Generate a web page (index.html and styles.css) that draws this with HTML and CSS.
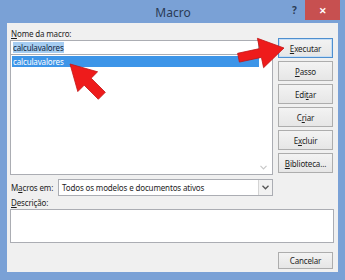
FILE: index.html
```html
<!DOCTYPE html>
<html lang="pt">
<head>
    <meta charset="UTF-8">
    <title>Macro</title>
    <link rel="stylesheet" href="styles.css">
</head>
<body>
    <div class="window">
        <div class="titlebar">
            <span class="title">Macro</span>
            <span class="help">?</span>
            <span class="close">&#x2715;</span>
        </div>

        <div class="client">
            <div class="top">
                <div class="left">
                    <div class="label"><u>N</u>ome da macro:</div>
                    <div class="input"><span class="sel">calculavalores</span></div>
                    <div class="list">
                        <div class="row active">calculavalores</div>
                        <svg class="scroll-down" width="7" height="5" viewBox="0 0 7 5"><path d="M0.5 0.8 L3.5 3.8 L6.5 0.8" fill="none" stroke="#c8c8c8" stroke-width="1.2"/></svg>
                    </div>
                    <div class="macros-in">
                        <span class="label">M<u>a</u>cros em:</span>
                        <div class="combo">
                            <span class="combo-text">Todos os modelos e documentos ativos</span>
                            <span class="combo-btn">
                                <svg width="7" height="5" viewBox="0 0 7 5"><path d="M0.5 0.8 L3.5 3.8 L6.5 0.8" fill="none" stroke="#555" stroke-width="1.3"/></svg>
                            </span>
                        </div>
                    </div>
                </div>

                <div class="buttons">
                    <button class="btn default"><u>E</u>xecutar</button>
                    <button class="btn"><u>P</u>asso</button>
                    <button class="btn">Edi<u>t</u>ar</button>
                    <button class="btn">C<u>r</u>iar</button>
                    <button class="btn">E<u>x</u>cluir</button>
                    <button class="btn"><u>B</u>iblioteca...</button>
                </div>
            </div>

            <div class="label desc-label"><u>D</u>escrição:</div>
            <div class="desc"></div>

            <div class="footer">
                <button class="btn">Cancelar</button>
            </div>
        </div>

        <!-- red callout arrows drawn over the dialog -->
        <svg class="arrows" width="345" height="280" viewBox="0 0 345 280">
            <polygon points="284,48 263.6,67.7 261.4,57.4 239.4,62.1 237.6,53.3 259.6,48.6 257.4,38.3" />
            <polygon points="70,64 97.6,71.8 91.2,78.2 105.3,92.3 98.3,99.3 84.2,85.2 77.8,91.6" />
        </svg>
    </div>
</body>
</html>
```

FILE: styles.css
```css
body {
    margin: 0;
    padding: 0;
    font-family: "Noto Sans", "Open Sans", sans-serif;
    font-size: 8px;
    letter-spacing: -0.15px;
    color: #1e1e1e;
}

.window {
    position: relative;
    width: 345px;
    height: 280px;
    background-color: #7aa1d6;
    display: flex;
    flex-direction: column;
}

.titlebar {
    height: 23px;
    position: relative;
    display: flex;
    align-items: center;
    justify-content: center;
}

.title {
    font-size: 12px;
    letter-spacing: 0;
    color: #2b3b55;
    margin-left: 1px;
    margin-top: 1px;
}

.help {
    position: absolute;
    left: 292px;
    top: 3px;
    font-size: 10px;
    font-weight: bold;
    color: #2b3b55;
}

.close {
    position: absolute;
    left: 305px;
    top: 0;
    width: 35px;
    height: 20px;
    background-color: #c75050;
    color: white;
    font-size: 9px;
    font-weight: bold;
    display: flex;
    align-items: center;
    justify-content: center;
}

.client {
    background-color: #f0f0f0;
    margin: 0 7px 8px 7px;
    height: 249px;
    padding: 5px 4px 0 3px;
    box-sizing: border-box;
}

.top {
    display: flex;
}

.left {
    width: 263px;
}

.label {
    height: 12px;
    line-height: 12px;
    padding-left: 1px;
    white-space: nowrap;
}

.input {
    width: 249px;
    height: 15px;
    box-sizing: border-box;
    border: 1px solid #abadb3;
    background: white;
    padding: 1px 0 0 2px;
    line-height: 12px;
}

.sel {
    background-color: #a6cdf1;
    color: #10263d;
}

.list {
    position: relative;
    height: 120px;
    box-sizing: border-box;
    border: 1px solid #abadb3;
    border-top: none;
    background: white;
    padding: 1px 0 0 1px;
}

.row {
    width: 246px;
    height: 11px;
    line-height: 11px;
    padding-left: 1px;
}

.row.active {
    background-color: #3d95e8;
    color: white;
}

.scroll-down {
    position: absolute;
    right: 5px;
    bottom: 4px;
}

.macros-in {
    display: flex;
    align-items: center;
    margin-top: 4px;
}

.macros-in .label {
    width: 47px;
    flex-shrink: 0;
}

.combo {
    flex: 1;
    height: 17px;
    box-sizing: border-box;
    border: 1px solid #abadb3;
    background: white;
    display: flex;
    align-items: center;
}

.combo-text {
    flex: 1;
    padding-left: 3px;
}

.combo-btn {
    width: 13px;
    height: 15px;
    border-left: 1px solid #d4d4d4;
    background: #f2f2f2;
    display: flex;
    align-items: center;
    justify-content: center;
}

.buttons {
    margin-left: 5px;
    margin-top: 10px;
    display: flex;
    flex-direction: column;
    gap: 3px;
}

.btn {
    width: 55px;
    height: 20px;
    font-family: inherit;
    font-size: 8px;
    letter-spacing: -0.15px;
    color: #1e1e1e;
    border: 1px solid #adadad;
    background: linear-gradient(#f3f3f3, #e6e6e6);
    padding: 0;
    border-radius: 0;
}

.btn.default {
    border-color: #4f8fcf;
    box-shadow: inset 0 0 0 1px #c6def5;
}

.desc-label {
    margin-top: 1px;
}

.desc {
    height: 34px;
    box-sizing: border-box;
    border: 1px solid #abadb3;
    background: white;
}

.footer {
    display: flex;
    justify-content: flex-end;
    padding-right: 1px;
    margin-top: 9px;
}

.footer .btn {
    height: 17px;
}

.arrows {
    position: absolute;
    left: 0;
    top: 0;
    pointer-events: none;
}

.arrows polygon {
    fill: #ee1b1b;
    stroke: #c11515;
    stroke-width: 0.8;
}
```
